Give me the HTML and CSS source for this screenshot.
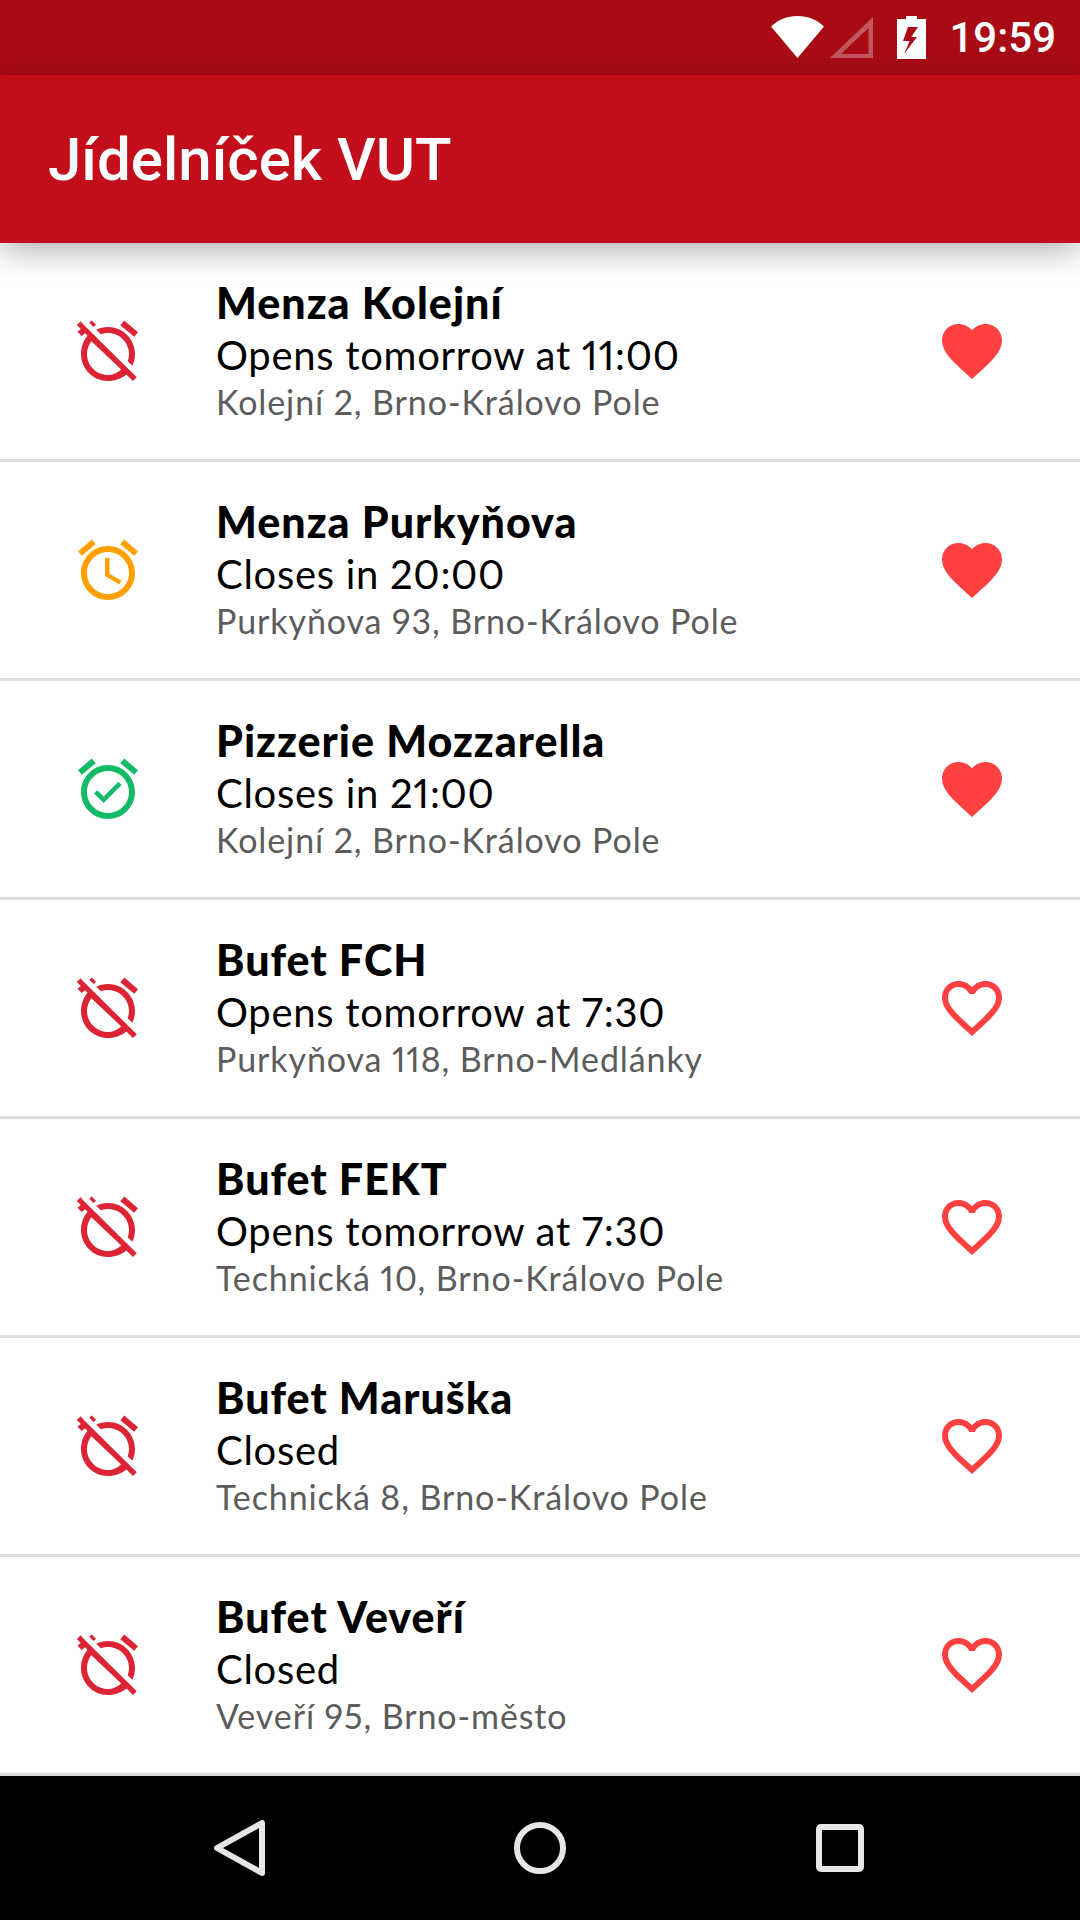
FILE: index.html
```html
<!DOCTYPE html>
<html lang="en">

<head>
    <meta charset="UTF-8">
    <meta name="viewport" content="width=device-width, initial-scale=1.0">
    <title>Jídelníček VUT</title>
    <link rel="stylesheet" href="styles.css">
</head>

<body>
    <svg class="icon-defs" width="0" height="0">
        <symbol id="alarm-off" viewBox="0 0 24 24">
            <path d="M12 6c3.87 0 7 3.13 7 7 0 .84-.16 1.65-.43 2.4l1.52 1.52c.58-1.19.91-2.51.91-3.92 0-4.97-4.03-9-9-9-1.41 0-2.73.33-3.92.91L9.6 6.43C10.35 6.16 11.16 6 12 6zm10-.28l-4.6-3.86-1.29 1.53 4.6 3.86L22 5.72zM2.86 2.05L1.59 3.32 2.93 4.66 1.82 5.6l1.42 1.42 1.11-.94.8.8C3.83 8.49 3 10.65 3 13c0 4.97 4.02 9 9 9 2.35 0 4.51-.83 6.12-2.18l2.2 2.2 1.27-1.27L3.89 3.27l-1.03-1.22zm13.55 16.1C15.14 19.33 13.65 20 12 20c-3.87 0-7-3.13-7-7 0-1.6.55-3.07 1.46-4.24l9.95 9.39zM8.02 3.28L6.6 1.86l-.86.71 1.42 1.42.86-.71z" />
        </symbol>
        <symbol id="alarm-soon" viewBox="0 0 24 24">
            <path d="M22 5.72l-4.6-3.86-1.29 1.53 4.6 3.86L22 5.72zM7.88 3.39L6.6 1.86 2 5.71l1.29 1.53 4.59-3.85zM12.5 8H11v6l4.75 2.85.75-1.23-4-2.37V8zM12 4c-4.97 0-9 4.03-9 9s4.02 9 9 9c4.97 0 9-4.03 9-9s-4.03-9-9-9zm0 16c-3.87 0-7-3.13-7-7s3.13-7 7-7 7 3.13 7 7-3.13 7-7 7z" />
        </symbol>
        <symbol id="alarm-on" viewBox="0 0 24 24">
            <path d="M22 5.72l-4.6-3.86-1.29 1.53 4.6 3.86L22 5.72zM7.88 3.39L6.6 1.86 2 5.71l1.29 1.53 4.59-3.85zM12 4c-4.97 0-9 4.03-9 9s4.02 9 9 9c4.97 0 9-4.03 9-9s-4.03-9-9-9zm0 16c-3.87 0-7-3.13-7-7s3.13-7 7-7 7 3.13 7 7-3.13 7-7 7zm-1.46-5.47L8.41 12.4l-1.06 1.06 3.18 3.18 6-6-1.06-1.06-4.93 4.95z" />
        </symbol>
        <symbol id="heart" viewBox="0 0 24 24">
            <path d="M12 21.35l-1.45-1.32C5.4 15.36 2 12.28 2 8.5 2 5.42 4.42 3 7.5 3c1.74 0 3.41.81 4.5 2.09C13.09 3.81 14.76 3 16.5 3 19.58 3 22 5.42 22 8.5c0 3.78-3.4 6.86-8.55 11.54L12 21.35z" />
        </symbol>
        <symbol id="heart-border" viewBox="0 0 24 24">
            <path d="M16.5 3c-1.74 0-3.41.81-4.5 2.09C10.91 3.81 9.24 3 7.5 3 4.42 3 2 5.42 2 8.5c0 3.78 3.4 6.86 8.55 11.54L12 21.35l1.45-1.32C18.6 15.36 22 12.28 22 8.5 22 5.42 19.58 3 16.5 3zm-4.4 15.55l-.1.1-.1-.1C7.14 14.24 4 11.39 4 8.5 4 6.5 5.5 5 7.5 5c1.54 0 3.04.99 3.57 2.36h1.87C13.46 5.99 14.96 5 16.5 5c2 0 3.5 1.5 3.5 3.5 0 2.89-3.14 5.74-7.9 10.05z" />
        </symbol>
    </svg>

    <div class="screen">
        <div class="status-bar">
            <svg class="status-wifi" viewBox="0 0 53 42"><path d="M0 10.5C7 4 16 0 26.500 0S46 4 53 10.500L26.500 42z" /></svg>
            <svg class="status-signal" viewBox="0 0 43 41"><path d="M43 0v41H0zM38.500 11L11 37h27.500z" fill-rule="evenodd" /></svg>
            <svg class="status-battery" viewBox="0 0 29 43"><path d="M9 0h11v3h9v40H0V3h9zM11 11h10l-6.700 10H20L7 38l5.700-13H6z" fill-rule="evenodd" /></svg>
            <span class="status-time">19:59</span>
        </div>

        <header class="app-bar">
            <h1>Jídelníček VUT</h1>
        </header>

        <main class="place-list">
            <div class="place">
                <svg class="state closed"><use href="#alarm-off" /></svg>
                <div class="place-info">
                    <div class="place-name">Menza Kolejní</div>
                    <div class="place-hours">Opens tomorrow at 11:00</div>
                    <div class="place-address">Kolejní 2, Brno-Královo Pole</div>
                </div>
                <svg class="fav"><use href="#heart" /></svg>
            </div>
            <div class="place">
                <svg class="state closing"><use href="#alarm-soon" /></svg>
                <div class="place-info">
                    <div class="place-name">Menza Purkyňova</div>
                    <div class="place-hours">Closes in 20:00</div>
                    <div class="place-address">Purkyňova 93, Brno-Královo Pole</div>
                </div>
                <svg class="fav"><use href="#heart" /></svg>
            </div>
            <div class="place">
                <svg class="state open"><use href="#alarm-on" /></svg>
                <div class="place-info">
                    <div class="place-name">Pizzerie Mozzarella</div>
                    <div class="place-hours">Closes in 21:00</div>
                    <div class="place-address">Kolejní 2, Brno-Královo Pole</div>
                </div>
                <svg class="fav"><use href="#heart" /></svg>
            </div>
            <div class="place">
                <svg class="state closed"><use href="#alarm-off" /></svg>
                <div class="place-info">
                    <div class="place-name">Bufet FCH</div>
                    <div class="place-hours">Opens tomorrow at 7:30</div>
                    <div class="place-address">Purkyňova 118, Brno-Medlánky</div>
                </div>
                <svg class="fav"><use href="#heart-border" /></svg>
            </div>
            <div class="place">
                <svg class="state closed"><use href="#alarm-off" /></svg>
                <div class="place-info">
                    <div class="place-name">Bufet FEKT</div>
                    <div class="place-hours">Opens tomorrow at 7:30</div>
                    <div class="place-address">Technická 10, Brno-Královo Pole</div>
                </div>
                <svg class="fav"><use href="#heart-border" /></svg>
            </div>
            <div class="place">
                <svg class="state closed"><use href="#alarm-off" /></svg>
                <div class="place-info">
                    <div class="place-name">Bufet Maruška</div>
                    <div class="place-hours">Closed</div>
                    <div class="place-address">Technická 8, Brno-Královo Pole</div>
                </div>
                <svg class="fav"><use href="#heart-border" /></svg>
            </div>
            <div class="place">
                <svg class="state closed"><use href="#alarm-off" /></svg>
                <div class="place-info">
                    <div class="place-name">Bufet Veveří</div>
                    <div class="place-hours">Closed</div>
                    <div class="place-address">Veveří 95, Brno-město</div>
                </div>
                <svg class="fav"><use href="#heart-border" /></svg>
            </div>
        </main>

        <nav class="nav-bar">
            <svg class="nav-back" viewBox="0 0 51 56"><path d="M48 3v50L3 28z" /></svg>
            <svg class="nav-home" viewBox="0 0 52 52"><circle cx="26" cy="26" r="23" /></svg>
            <svg class="nav-recent" viewBox="0 0 48 48"><rect x="3" y="3" width="42" height="42" rx="2" /></svg>
        </nav>
    </div>
</body>

</html>
```

FILE: styles.css
```css
body {
    margin: 0;
    padding: 0;
    background-color: #fff;
    font-family: Lato, "Noto Sans", sans-serif;
}

.icon-defs {
    position: absolute;
}

.screen {
    display: flex;
    flex-direction: column;
    width: 1080px;
    height: 1920px;
    overflow: hidden;
}

.status-bar {
    display: flex;
    align-items: center;
    height: 75px;
    padding-right: 24px;
    box-sizing: border-box;
    justify-content: flex-end;
    background-color: #a90b15;
    color: #fff;
    fill: #fff;
}

.status-wifi {
    width: 53px;
    height: 42px;
    margin-top: -1px;
}

.status-signal {
    width: 43px;
    height: 41px;
    margin-left: 6px;
    opacity: 0.3;
}

.status-battery {
    width: 29px;
    height: 43px;
    margin-left: 24px;
}

.status-time {
    margin-left: 23px;
    font-family: Roboto, sans-serif;
    font-size: 42px;
    font-weight: 500;
}

.app-bar {
    position: relative;
    display: flex;
    align-items: center;
    height: 168px;
    padding-left: 48px;
    background-color: #c20e1a;
    box-shadow: 0 8px 30px rgba(0, 0, 0, 0.3);
}

.app-bar h1 {
    margin: 0;
    color: #fff;
    font-family: Roboto, sans-serif;
    font-size: 60px;
    font-weight: 500;
}

.place-list {
    flex: 1;
}

.place {
    display: flex;
    align-items: center;
    height: 219px;
    padding: 0 72px;
    box-sizing: border-box;
    border-bottom: 3px solid #dcdcdc;
}

.state {
    width: 72px;
    height: 72px;
    flex-shrink: 0;
}

.state.closed {
    fill: #dd2435;
}

.state.closing {
    fill: #ffa000;
}

.state.open {
    fill: #13bb66;
}

.place-info {
    flex: 1;
    margin-left: 72px;
    font-variant-numeric: proportional-nums;
}

.place-name {
    color: #000;
    font-size: 43px;
    font-weight: 900;
    letter-spacing: 1px;
    line-height: 50px;
}

.place-hours {
    position: relative;
    top: 1px;
    color: #000;
    font-size: 40px;
    letter-spacing: 0.7px;
    line-height: 52px;
}

.place-address {
    color: #5c5c5c;
    font-size: 34px;
    letter-spacing: 0.9px;
    line-height: 44px;
}

.fav {
    width: 72px;
    height: 72px;
    flex-shrink: 0;
    fill: #ff4040;
}

.nav-bar {
    position: relative;
    height: 144px;
    background-color: #000;
    fill: none;
    stroke: #e6e6e6;
    stroke-width: 6;
    stroke-linejoin: round;
}

.nav-bar svg {
    position: absolute;
}

.nav-back {
    left: 214px;
    top: 44px;
    width: 51px;
    height: 56px;
}

.nav-home {
    left: 514px;
    top: 46px;
    width: 52px;
    height: 52px;
}

.nav-recent {
    left: 816px;
    top: 48px;
    width: 48px;
    height: 48px;
}
```
